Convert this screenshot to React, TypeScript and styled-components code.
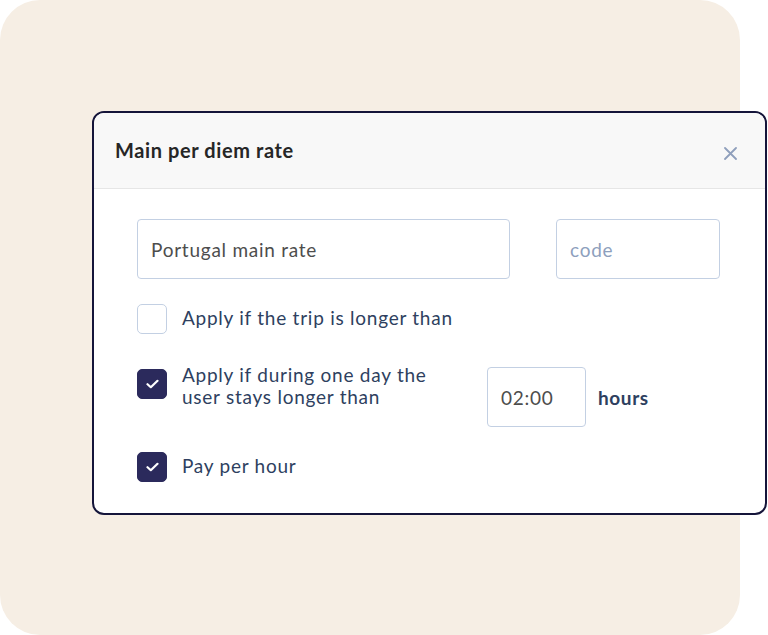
import React from "react";
import styled, { createGlobalStyle } from "styled-components";

const Global = createGlobalStyle`
  html, body { margin: 0; padding: 0; background: #ffffff; }
  body { font-family: "Lato", "Open Sans", sans-serif; overflow: hidden; }
`;

const Stage = styled.div`
  width: 768px;
  height: 635px;
  overflow: hidden;
  background: #ffffff;
`;

const Backdrop = styled.div`
  width: 740px;
  height: 635px;
  box-sizing: border-box;
  background: #f6eee4;
  border-radius: 40px;
  padding: 111px 0 0 92px;
`;

const Modal = styled.div`
  width: 675px;
  height: 404px;
  box-sizing: border-box;
  background: #ffffff;
  border: 2px solid #15153a;
  border-radius: 12px;
  overflow: hidden;
  display: flex;
  flex-direction: column;
`;

const Header = styled.div`
  height: 76px;
  box-sizing: border-box;
  background: #f8f8f8;
  border-bottom: 1px solid #e6e6e6;
  display: flex;
  align-items: center;
  justify-content: space-between;
  padding: 0 28px 1px 21px;
`;

const Title = styled.h2`
  margin: 0;
  font-family: "Lato", sans-serif;
  font-size: 20px;
  letter-spacing: 0.6px;
  font-weight: 700;
  color: #262626;
`;

const CloseButton = styled.button`
  border: none;
  background: none;
  padding: 0;
  margin-top: 6px;
  width: 14px;
  height: 14px;
  display: flex;
  align-items: center;
  justify-content: center;
  cursor: pointer;
`;

const Body = styled.div`
  padding: 30px 45px 0 43px;
  display: flex;
  flex-direction: column;
`;

const InputRow = styled.div`
  display: flex;
  gap: 46px;
  margin-bottom: 25px;
`;

const TextBox = styled.div<{ $w: number; $placeholder?: boolean }>`
  width: ${(p) => p.$w}px;
  flex: none;
  height: 60px;
  box-sizing: border-box;
  border: 1.5px solid #c3d0e3;
  border-radius: 4px;
  display: flex;
  align-items: center;
  padding-left: 13px;
  font-size: 19px;
  letter-spacing: 0.75px;
  color: ${(p) => (p.$placeholder ? "#8e9fbd" : "#4d4d4d")};
  background: #ffffff;
`;

const CheckRow = styled.div<{ $mb: number }>`
  display: flex;
  align-items: flex-start;
  margin-bottom: ${(p) => p.$mb}px;
`;

const Box = styled.span<{ $checked?: boolean; $mt?: number }>`
  width: 30px;
  height: 30px;
  flex: none;
  box-sizing: border-box;
  border-radius: 5px;
  border: 1.5px solid ${(p) => (p.$checked ? "#2b2a5c" : "#c3d0e3")};
  background: ${(p) => (p.$checked ? "#2b2a5c" : "#ffffff")};
  display: flex;
  align-items: center;
  justify-content: center;
  margin-right: 15px;
  margin-top: ${(p) => p.$mt ?? 0}px;
`;

const Label = styled.span<{ $w?: number; $mt?: number }>`
  font-size: 19px;
  line-height: 22px;
  letter-spacing: 0.75px;
  color: #2e3f60;
  flex: none;
  box-sizing: border-box;
  width: ${(p) => (p.$w ? `${p.$w}px` : "auto")};
  padding-right: ${(p) => (p.$w ? "40px" : "0")};
  margin-top: ${(p) => p.$mt ?? 3}px;
`;

const TimeBox = styled(TextBox)`
  margin-right: 12px;
`;

const Unit = styled.span`
  align-self: center;
  font-size: 19px;
  letter-spacing: 0.6px;
  font-weight: 700;
  color: #2e3f60;
`;

const Check = () => (
  <svg width="13" height="10" viewBox="0 0 13 10" fill="none">
    <path d="M1.5 5.2 L4.8 8.2 L11.5 1.8" stroke="#fff" strokeWidth="2.2" strokeLinecap="round" strokeLinejoin="round" />
  </svg>
);

export default function App() {
  return (
    <>
      <Global />
      <Stage>
        <Backdrop>
          <Modal>
            <Header>
              <Title>Main per diem rate</Title>
              <CloseButton aria-label="Close">
                <svg width="13" height="13" viewBox="0 0 13 13">
                  <path d="M1 1 L12 12 M12 1 L1 12" stroke="#8f9fbc" strokeWidth="1.8" strokeLinecap="round" />
                </svg>
              </CloseButton>
            </Header>
            <Body>
              <InputRow>
                <TextBox $w={373}>Portugal main rate</TextBox>
                <TextBox $w={164} $placeholder>code</TextBox>
              </InputRow>
              <CheckRow $mb={33}>
                <Box />
                <Label>Apply if the trip is longer than</Label>
              </CheckRow>
              <CheckRow $mb={25}>
                <Box $checked $mt={2}>
                  <Check />
                </Box>
                <Label $w={305} $mt={-3}>Apply if during one day the user stays longer than</Label>
                <TimeBox $w={99}>02:00</TimeBox>
                <Unit>hours</Unit>
              </CheckRow>
              <CheckRow $mb={0}>
                <Box $checked>
                  <Check />
                </Box>
                <Label>Pay per hour</Label>
              </CheckRow>
            </Body>
          </Modal>
        </Backdrop>
      </Stage>
    </>
  );
}
